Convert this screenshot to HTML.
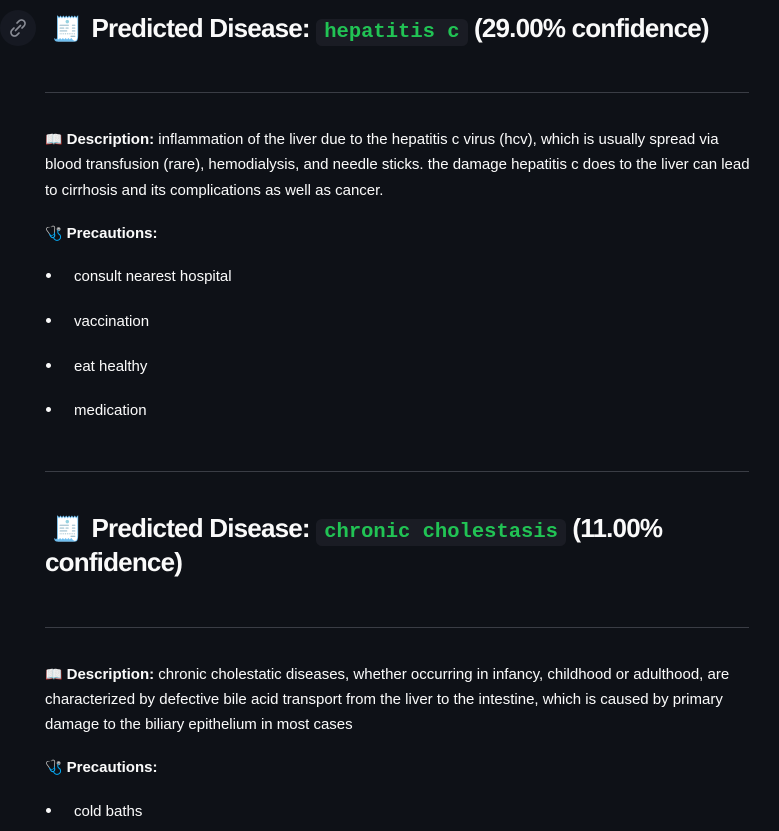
<!DOCTYPE html>
<html><head><meta charset="utf-8"><style>
html,body{margin:0;padding:0;background:#0e1117;width:779px;height:831px;overflow:hidden;color:#fafafa;font-family:"Liberation Sans",sans-serif;}
.a{position:absolute;white-space:nowrap;}
.t{font-size:15px;letter-spacing:0;line-height:26px;}
.h{font-size:26px;font-weight:bold;letter-spacing:-0.8px;line-height:34px;}
.code{font-family:"Liberation Mono",monospace;font-weight:bold;color:#21c354;background:#1a1c24;border-radius:6px;padding:2px 8px;font-size:20.5px;letter-spacing:0;}
hr{position:absolute;left:45px;width:704px;border:0;border-top:1px solid #3a3d45;margin:0;height:0;}
.b{position:absolute;left:46px;width:5px;height:5px;border-radius:50%;background:#fafafa;}
.link{position:absolute;left:0;top:10px;width:36px;height:36px;border-radius:50%;background:#161922;}
.ic{display:inline-block;font-size:14px;}
</style></head><body>
<div class="link"><svg width="36" height="36" viewBox="0 0 36 36"><g fill="none" stroke="#8a8d96" stroke-width="1.6" stroke-linecap="round"><path d="M17 13l2-2a3.5 3.5 0 015 5l-2 2"/><path d="M19 23l-2 2a3.5 3.5 0 01-5-5l2-2"/><path d="M15.5 20.5l5-5"/></g></svg></div>

<div class="a h" style="left:52px;top:11px;"><span style="font-size:24px;margin-right:4px">🧾</span> Predicted Disease: <span class="code">hepatitis c</span> (29.00% confidence)</div>
<hr style="top:92px">
<div class="a t" style="left:45px;top:126px;"><span class="ic">📖</span> <b>Description:</b> inflammation of the liver due to the hepatitis c virus (hcv), which is usually spread via</div>
<div class="a t" style="left:45px;top:152px;">blood transfusion (rare), hemodialysis, and needle sticks. the damage hepatitis c does to the liver can lead</div>
<div class="a t" style="left:45px;top:178px;">to cirrhosis and its complications as well as cancer.</div>
<div class="a t" style="left:45px;top:220px;"><span class="ic">🩺</span> <b>Precautions:</b></div>
<div class="b" style="top:273px"></div><div class="a t" style="left:74px;top:264px;">consult nearest hospital</div>
<div class="b" style="top:318px"></div><div class="a t" style="left:74px;top:309px;">vaccination</div>
<div class="b" style="top:363px"></div><div class="a t" style="left:74px;top:354px;">eat healthy</div>
<div class="b" style="top:407px"></div><div class="a t" style="left:74px;top:398px;">medication</div>
<hr style="top:471px">
<div class="a h" style="left:52px;top:511px;"><span style="font-size:24px;margin-right:4px">🧾</span> Predicted Disease: <span class="code">chronic cholestasis</span> (11.00%</div>
<div class="a h" style="left:45px;top:545px;">confidence)</div>
<hr style="top:627px">
<div class="a t" style="left:45px;top:661px;"><span class="ic">📖</span> <b>Description:</b> chronic cholestatic diseases, whether occurring in infancy, childhood or adulthood, are</div>
<div class="a t" style="left:45px;top:687px;">characterized by defective bile acid transport from the liver to the intestine, which is caused by primary</div>
<div class="a t" style="left:45px;top:712px;">damage to the biliary epithelium in most cases</div>
<div class="a t" style="left:45px;top:754px;"><span class="ic">🩺</span> <b>Precautions:</b></div>
<div class="b" style="top:808px"></div><div class="a t" style="left:74px;top:799px;">cold baths</div>
</body></html>
